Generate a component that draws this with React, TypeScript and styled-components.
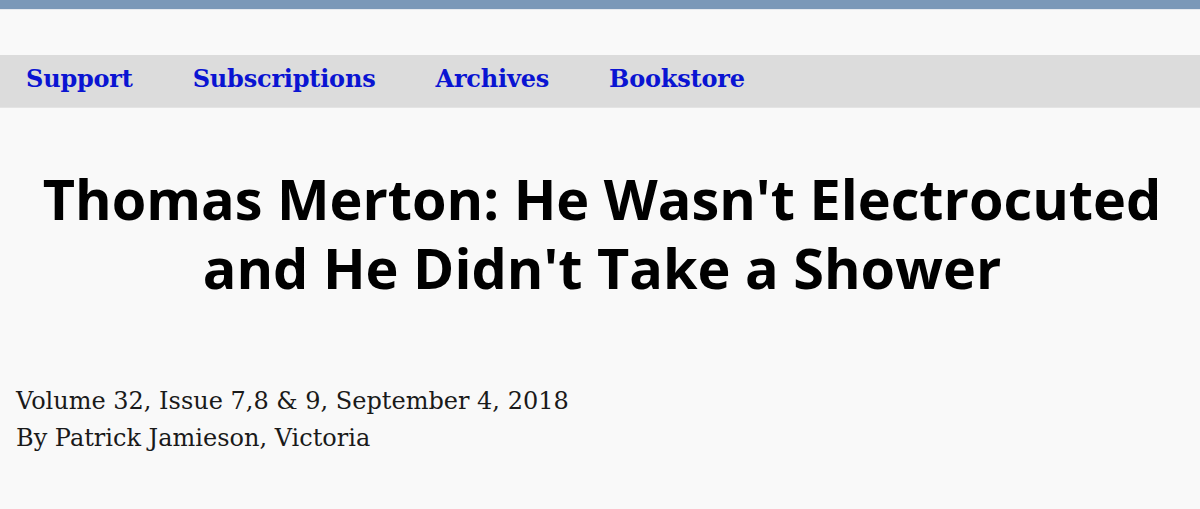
import React from "react";
import styled, { createGlobalStyle } from "styled-components";

const Global = createGlobalStyle`
  html, body { margin: 0; padding: 0; background: #f9f9f9; }
  body { font-family: "DejaVu Serif", serif; }
`;

const Page = styled.div`
  width: 1200px;
  min-height: 509px;
  background: #f9f9f9;
  display: flex;
  flex-direction: column;
`;

const TopBar = styled.div`
  height: 9px;
  background: #7b98b8;
  border-bottom: 1px solid #e6e9ee;
`;

const Nav = styled.nav`
  margin-top: 45px;
  height: 52px;
  background: #dcdcdc;
  border-bottom: 1px solid #e4e4e4;
  display: flex;
  align-items: center;
  gap: 60px;
  padding-left: 26px;
`;

const NavLink = styled.a`
  font-family: "DejaVu Serif", serif;
  font-weight: bold;
  font-size: 24px;
  line-height: 1;
  margin-top: -4px;
  color: #0a14d2;
  text-decoration: none;
  letter-spacing: -0.2px;
`;

const Title = styled.h1`
  margin: 56px 0 0;
  padding-left: 4px;
  font-family: "Open Sans", sans-serif;
  font-weight: 700;
  font-size: 55.8px;
  line-height: 69px;
  text-align: center;
  color: #000;
`;

const Meta = styled.div`
  margin-top: 81px;
  padding-left: 16px;
  font-family: "DejaVu Serif", serif;
  font-size: 24px;
  line-height: 37px;
  color: #1a1a1a;
`;

const MetaLine = styled.div``;

export default function App() {
  return (
    <Page>
      <Global />
      <TopBar />
      <Nav>
        <NavLink href="#">Support</NavLink>
        <NavLink href="#">Subscriptions</NavLink>
        <NavLink href="#">Archives</NavLink>
        <NavLink href="#">Bookstore</NavLink>
      </Nav>
      <Title>
        Thomas Merton: He Wasn't Electrocuted
        <br />
        and He Didn't Take a Shower
      </Title>
      <Meta>
        <MetaLine>Volume 32, Issue 7,8 &amp; 9, September 4, 2018</MetaLine>
        <MetaLine>By Patrick Jamieson, Victoria</MetaLine>
      </Meta>
    </Page>
  );
}
